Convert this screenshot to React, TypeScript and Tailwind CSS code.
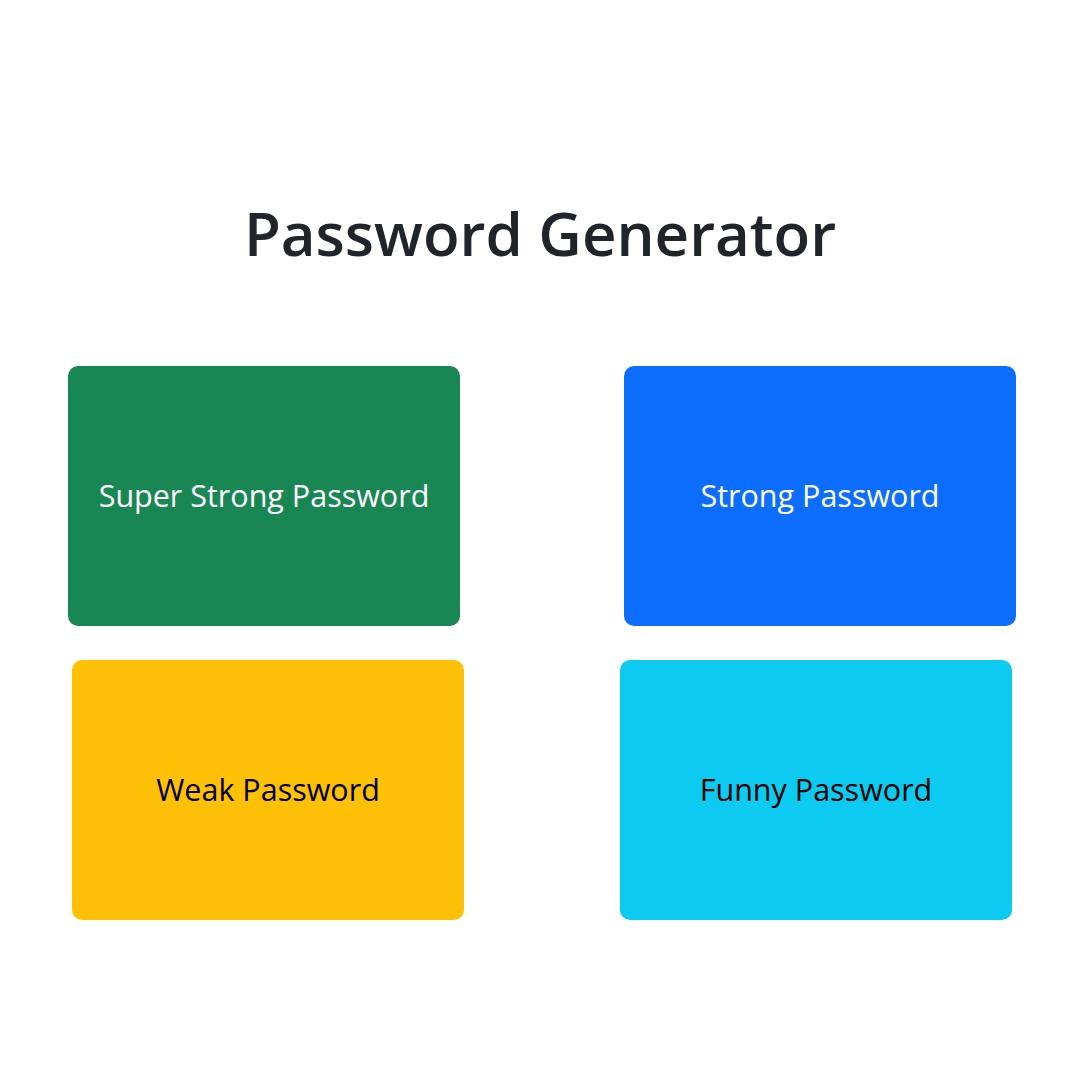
import React from 'react';

type Option = {
  label: string;
  className: string;
};

const topRow: Option[] = [
  { label: 'Super Strong Password', className: 'bg-[#198754] text-white' },
  { label: 'Strong Password', className: 'bg-[#0d6efd] text-white' },
];

const bottomRow: Option[] = [
  { label: 'Weak Password', className: 'bg-[#ffc107] text-[#000000]' },
  { label: 'Funny Password', className: 'bg-[#0dcaf0] text-[#000000]' },
];

const PasswordButton: React.FC<{ option: Option }> = ({ option }) => (
  <button
    type="button"
    className={`flex h-[260px] w-[392px] items-center justify-center rounded-[10px] text-[30.5px] ${option.className}`}
  >
    {option.label}
  </button>
);

export default function App() {
  return (
    <div className="min-h-[1080px] w-[1080px] bg-white font-['Open_Sans',sans-serif] text-[#212529]">
      <div className="pt-[193px]">
        <h1 className="text-center text-[60px] font-semibold leading-[80px]">Password Generator</h1>
      </div>

      <div className="mt-[93px] flex justify-between pl-[68px] pr-[64px]">
        {topRow.map((option) => (
          <PasswordButton key={option.label} option={option} />
        ))}
      </div>

      <div className="mt-[34px] flex justify-between pl-[72px] pr-[68px]">
        {bottomRow.map((option) => (
          <PasswordButton key={option.label} option={option} />
        ))}
      </div>
    </div>
  );
}
